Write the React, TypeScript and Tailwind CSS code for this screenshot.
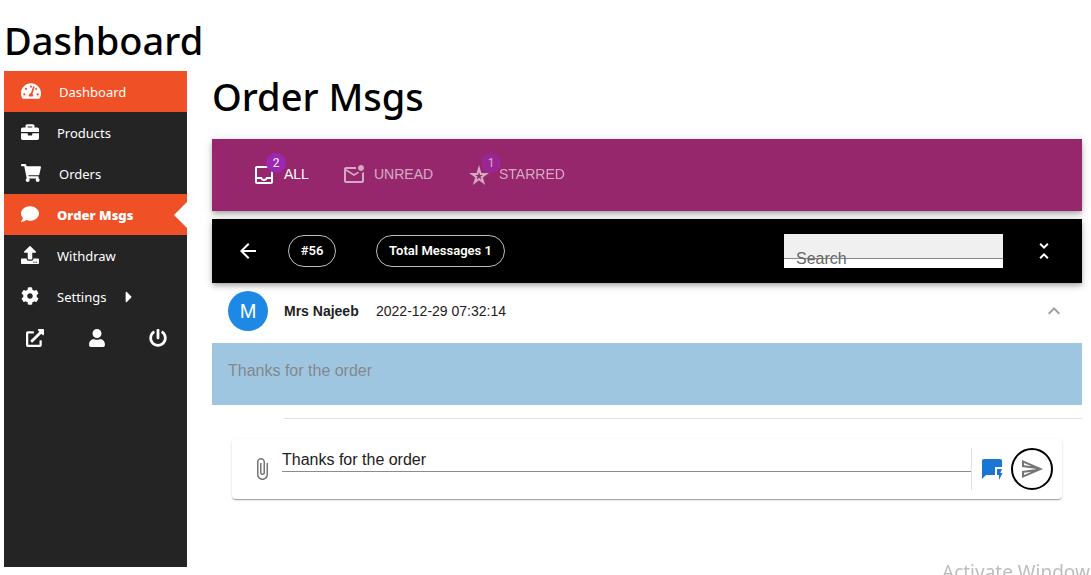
import React, { useState } from "react";
import {
  FaBriefcase,
  FaCaretRight,
  FaCog,
  FaComment,
  FaExternalLinkAlt,
  FaPowerOff,
  FaShoppingCart,
  FaTachometerAlt,
  FaUpload,
  FaUser,
} from "react-icons/fa";
import {
  MdArrowBack,
  MdAttachFile,
  MdKeyboardArrowUp,
  MdOutlineInbox,
  MdOutlineMarkEmailUnread,
  MdOutlineSend,
  MdQuickreply,
  MdStarBorderPurple500,
  MdUnfoldLess,
} from "react-icons/md";

const barShadow =
  "shadow-[0_2px_4px_-1px_rgba(0,0,0,0.2),0_4px_5px_0_rgba(0,0,0,0.14),0_1px_10px_0_rgba(0,0,0,0.12)]";

const menu = [
  { label: "Dashboard", icon: <FaTachometerAlt size={20} />, highlighted: true },
  { label: "Products", icon: <FaBriefcase size={18} /> },
  { label: "Orders", icon: <FaShoppingCart size={20} /> },
  { label: "Order Msgs", icon: <FaComment size={18} />, highlighted: true, current: true },
  { label: "Withdraw", icon: <FaUpload size={18} /> },
  { label: "Settings", icon: <FaCog size={18} />, submenu: true },
];

function Sidebar() {
  return (
    <nav
      aria-label="Vendor"
      className="min-h-[496px] w-[183px] shrink-0 bg-[#242424] text-[13px] text-white"
    >
      <ul>
        {menu.map((item) => (
          <li key={item.label}>
            <a
              href="#"
              aria-current={item.current ? "page" : undefined}
              className={`relative flex h-[41px] items-center gap-[18px] pl-[17px] ${
                item.highlighted ? "bg-[#f05025]" : ""
              } ${item.current ? "font-black" : ""}`}
            >
              <span className="shrink-0 pb-[2px]">{item.icon}</span>
              <span className="pt-[2px]">{item.label}</span>
              {item.submenu && <FaCaretRight size={18} className="-ml-1" />}
              {item.current && (
                <span className="absolute top-2 right-0 border-y-[13px] border-r-[13px] border-y-transparent border-r-white" />
              )}
            </a>
          </li>
        ))}
      </ul>
      <div className="flex h-[41px] items-center justify-between pr-5 pl-[22px]">
        <a href="#" aria-label="Visit store">
          <FaExternalLinkAlt size={18} />
        </a>
        <a href="#" aria-label="Edit account">
          <FaUser size={18} />
        </a>
        <a href="#" aria-label="Log out">
          <FaPowerOff size={18} />
        </a>
      </div>
    </nav>
  );
}

function Badge({ count }: { count: number }) {
  return (
    <span className="absolute -top-[10px] -right-[10px] flex size-5 items-center justify-center rounded-full bg-[#9c27b0] font-['Roboto',sans-serif] text-xs font-normal text-white">
      {count}
    </span>
  );
}

function Tabs() {
  return (
    <div
      role="tablist"
      className={`flex h-[72px] bg-[#96276c] px-6 text-sm font-medium text-white ${barShadow}`}
    >
      <button role="tab" aria-selected="true" className="flex min-w-[90px] items-center gap-2 px-4">
        <span className="relative">
          <MdOutlineInbox size={24} />
          <Badge count={2} />
        </span>
        <span className="pb-[2px]">ALL</span>
      </button>
      <button
        role="tab"
        aria-selected="false"
        className="flex min-w-[125px] items-center gap-2 px-4 opacity-60"
      >
        <MdOutlineMarkEmailUnread size={24} />
        <span className="pb-[2px]">UNREAD</span>
      </button>
      <button role="tab" aria-selected="false" className="flex items-center gap-2 px-4 opacity-60">
        <span className="relative">
          <MdStarBorderPurple500 size={24} />
          <Badge count={1} />
        </span>
        <span className="pb-[2px]">STARRED</span>
      </button>
    </div>
  );
}

function Toolbar() {
  return (
    <div className={`mt-2 flex h-16 items-center bg-black pr-[26px] pl-6 text-white ${barShadow}`}>
      <button aria-label="Back">
        <MdArrowBack size={24} />
      </button>
      <span className="ml-7 flex h-8 min-w-12 items-center justify-center rounded-full border border-[#bdbdbd] px-[11px] font-['Roboto',sans-serif] text-[13px] font-semibold">
        #56
      </span>
      <span className="ml-10 flex h-8 min-w-[129px] items-center justify-center rounded-full border border-[#bdbdbd] px-[11px] font-['Roboto',sans-serif] text-[13px] font-semibold">
        Total Messages 1
      </span>
      <div className="relative ml-auto h-[34px] w-[219px] bg-white">
        <input
          id="search"
          type="text"
          className="block h-[25px] w-full border-b border-[#888888] bg-[#f0f0f0] px-3 text-base text-black outline-none"
        />
        <label htmlFor="search" className="absolute top-[13px] left-3 text-base text-[#666666]">
          Search
        </label>
      </div>
      <button aria-label="Collapse all" className="ml-[29px]">
        <MdUnfoldLess size={24} />
      </button>
    </div>
  );
}

function Message() {
  return (
    <article>
      <header className="flex h-[60px] items-start pt-2 pr-4 pl-4 text-sm text-[#212121]">
        <span className="flex size-10 items-center justify-center rounded-full bg-[#1e88e5] text-xl text-white">
          M
        </span>
        <span className="ml-4 min-w-[76px] leading-10 font-bold">Mrs Najeeb</span>
        <time className="ml-4 leading-10">2022-12-29 07:32:14</time>
        <button aria-label="Collapse message" className="ml-auto flex h-10 items-center text-[#9e9e9e]">
          <MdKeyboardArrowUp size={24} />
        </button>
      </header>
      <p className="h-[62px] bg-[#9fc6e0] px-4 pt-4 text-base text-[#84888d]">
        Thanks for the order
      </p>
    </article>
  );
}

function Composer() {
  const [text, setText] = useState("Thanks for the order");
  return (
    <form
      onSubmit={(event) => event.preventDefault()}
      className="mx-5 mt-5 flex h-[60px] items-center rounded bg-white pr-[9px] pl-[18px] shadow-[0_2px_1px_-1px_rgba(0,0,0,0.2),0_1px_1px_0_rgba(0,0,0,0.14),0_1px_3px_0_rgba(0,0,0,0.12)]"
    >
      <button type="button" aria-label="Attach file" className="text-[#757575]">
        <MdAttachFile size={24} />
      </button>
      <input
        aria-label="Message"
        value={text}
        onChange={(event) => setText(event.target.value)}
        className="mt-2 ml-2 h-[25px] min-w-0 grow self-start border-b border-[#8c8c8c] pt-[2px] text-base text-[#212121] outline-none"
      />
      <div className="flex items-center border-l border-[#e0e0e0] pl-2">
        <button type="button" aria-label="Quick reply" className="text-[#1976d2]">
          <MdQuickreply size={24} />
        </button>
        <button
          type="submit"
          aria-label="Send"
          className="ml-[7px] flex size-[42px] items-center justify-center rounded-full border-2 border-black text-[#757575]"
        >
          <MdOutlineSend size={24} />
        </button>
      </div>
    </form>
  );
}

export default function App() {
  return (
    <div className="relative min-h-screen overflow-hidden bg-white px-1 pb-2 font-['Noto_Sans','Open_Sans',sans-serif] text-black">
      <h1 className="pt-[10px] pb-px text-[38px] leading-[60px] font-medium">Dashboard</h1>
      <div className="flex">
        <Sidebar />
        <main className="mr-[5px] ml-[25px] min-w-0 grow">
          <h2 className="h-[68px] text-[38px] leading-[50px] font-medium">Order Msgs</h2>
          <div className="font-['Liberation_Sans',Arial,sans-serif]">
            <Tabs />
            <Toolbar />
            <Message />
            <hr className="mt-[13px] ml-[72px] border-[#e0e0e0]" />
            <Composer />
          </div>
        </main>
      </div>
      <div className="pointer-events-none fixed -right-2 -bottom-[11px] text-[19px] leading-7 whitespace-nowrap text-[#bdbdbd]">
        Activate Windows
      </div>
    </div>
  );
}
